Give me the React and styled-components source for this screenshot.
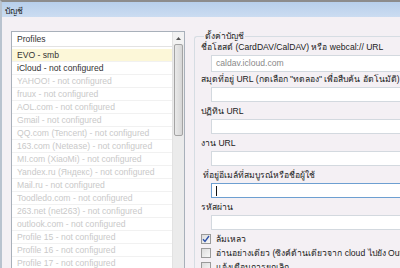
import React from "react";
import styled, { createGlobalStyle } from "styled-components";

const Global = createGlobalStyle`
  html, body { margin: 0; padding: 0; background: #f4f0f4; overflow: hidden; }
  body { font-family: "Liberation Sans", "Noto Sans", "DejaVu Sans", sans-serif; }
`;

const Frame = styled.div`
  width: 400px;
  height: 268px;
  box-sizing: border-box;
  border-top: 2px solid #8c8c8c;
  border-left: 2px solid #b9c3cf;
  background: #f4f0f4;
  display: flex;
  flex-direction: column;
  overflow: hidden;
`;

const TitleBar = styled.div`
  height: 15px;
  flex: none;
  box-sizing: border-box;
  padding: 3px 0 0 3px;
  background: linear-gradient(#b7cfeb, #cbdcf1);
  font-size: 8.5px;
  color: #222;
  display: flex;
  align-items: center;
`;

const Body = styled.div`
  flex: 1;
  display: flex;
  align-items: flex-start;
  gap: 9px;
  padding: 14px 0 0 9px;
  min-height: 0;
`;

const ListBox = styled.div`
  width: 174px;
  height: 260px;
  flex: none;
  box-sizing: border-box;
  border: 1px solid #a8b0ba;
  background: #fff;
  display: flex;
`;

const ListContent = styled.div`
  flex: 1;
  display: flex;
  flex-direction: column;
`;

const Header = styled.div`
  height: 14px;
  line-height: 14px;
  padding-left: 5px;
  font-size: 8.6px;
  color: #333;
  border-bottom: 1px solid #e3e3e3;
  margin-bottom: 2px;
`;

const Item = styled.div`
  height: 12px;
  line-height: 12px;
  padding-left: 5px;
  font-size: 8.6px;
  white-space: nowrap;
  border-bottom: 1px solid #f1f1f1;
  color: ${(p) => (p.$disabled ? "#c9c9c9" : "#333")};
  background: ${(p) => (p.$selected ? "#fcf7d8" : "#fff")};
`;

const ScrollBar = styled.div`
  width: 11px;
  flex: none;
  background: #ebebeb;
  border-left: 1px solid #e2e2e2;
  display: flex;
  flex-direction: column;
  align-items: center;
`;

const ArrowBtn = styled.div`
  height: 12px;
  width: 100%;
  display: flex;
  align-items: center;
  justify-content: center;
  background: #f2f2f2;
`;

const Thumb = styled.div`
  width: 9px;
  height: 92px;
  box-sizing: border-box;
  border: 1px solid #a4a4a4;
  border-radius: 2px;
  background: linear-gradient(90deg, #e9e9e9, #d6d6d6);
`;

const Group = styled.fieldset`
  flex: 1;
  margin: 0;
  padding: 1px 0 0 6px;
  border: 1px solid #d6dde3;
  border-right: none;
  border-radius: 3px 0 0 0;
  min-width: 0;
  height: 260px;
  box-sizing: border-box;
`;

const Legend = styled.legend`
  font-size: 8.5px;
  color: #222;
  padding: 0 1px;
  margin-left: 3px;
  line-height: 10px;
`;

const Field = styled.div`
  display: flex;
  flex-direction: column;
  margin-bottom: ${(p) => (p.$first ? "2px" : "4px")};
`;

const Label = styled.div`
  font-size: 8.6px;
  color: #222;
  line-height: 11px;
  height: 11px;
  white-space: nowrap;
  margin-bottom: 2px;
  padding-left: ${(p) => (p.$indent ? "2px" : "0")};
`;

const Input = styled.div`
  margin-left: 10px;
  height: ${(p) => (p.$tall ? "17px" : "15px")};
  box-sizing: border-box;
  border: 1px solid ${(p) => (p.$focus ? "#6d9fd1" : "#d3d9df")};
  background: #fff;
  font-size: 8.6px;
  color: #8a8a8a;
  line-height: 15px;
  padding-left: 4px;
  margin-right: -20px;
  display: flex;
  align-items: center;
`;

const Caret = styled.span`
  width: 1px;
  height: 10px;
  background: #111;
`;

const Checks = styled.div`
  display: flex;
  flex-direction: column;
  gap: 4px;
`;

const CheckRow = styled.div`
  display: flex;
  align-items: center;
  gap: 5px;
  height: 10px;
  font-size: 8.6px;
  color: #222;
  white-space: nowrap;
`;

const Box = styled.div`
  width: 10px;
  height: 10px;
  box-sizing: border-box;
  border: 1px solid #9a9a9a;
  background: linear-gradient(135deg, #dcdcdc, #f8f8f8);
  display: flex;
  align-items: center;
  justify-content: center;
  flex: none;
`;

const profiles = [
  ["EVO - smb", false, true],
  ["iCloud - not configured", false, false],
  ["YAHOO! - not configured", true],
  ["fruux - not configured", true],
  ["AOL.com - not configured", true],
  ["Gmail - not configured", true],
  ["QQ.com (Tencent) - not configured", true],
  ["163.com (Netease) - not configured", true],
  ["MI.com (XiaoMi) - not configured", true],
  ["Yandex.ru (Яндекс) - not configured", true],
  ["Mail.ru - not configured", true],
  ["Toodledo.com - not configured", true],
  ["263.net (net263) - not configured", true],
  ["outlook.com - not configured", true],
  ["Profile 15 - not configured", true],
  ["Profile 16 - not configured", true],
  ["Profile 17 - not configured", true],
];

export default function App() {
  return (
    <>
      <Global />
      <Frame>
        <TitleBar>บัญชี</TitleBar>
        <Body>
          <ListBox>
            <ListContent>
              <Header>Profiles</Header>
              {profiles.map(([t, d, s]) => (
                <Item key={t} $disabled={d} $selected={s}>{t}</Item>
              ))}
            </ListContent>
            <ScrollBar>
              <ArrowBtn>
                <svg width="5" height="3" viewBox="0 0 5 3"><path d="M0 3 L2.5 0 L5 3 Z" fill="#555" /></svg>
              </ArrowBtn>
              <Thumb />
            </ScrollBar>
          </ListBox>
          <Group>
            <Legend>ตั้งค่าบัญชี</Legend>
            <Field $first>
              <Label>ชื่อโฮสต์ (CardDAV/CalDAV) หรือ webcal:// URL</Label>
              <Input $tall>caldav.icloud.com</Input>
            </Field>
            <Field>
              <Label>สมุดที่อยู่ URL (กดเลือก "ทดลอง" เพื่อสืบค้น อัตโนมัติ)</Label>
              <Input />
            </Field>
            <Field>
              <Label>ปฏิทิน URL</Label>
              <Input />
            </Field>
            <Field>
              <Label>งาน URL</Label>
              <Input />
            </Field>
            <Field>
              <Label $indent>ที่อยู่อีเมล์ที่สมบูรณ์หรือชื่อผู้ใช้</Label>
              <Input $focus><Caret /></Input>
            </Field>
            <Field>
              <Label>รหัสผ่าน</Label>
              <Input />
            </Field>
            <Checks>
              <CheckRow>
                <Box>
                  <svg width="8" height="8" viewBox="0 0 8 8"><path d="M1 4.2 L3 6.5 L7 1" stroke="#2b4fa8" strokeWidth="1.3" fill="none" /></svg>
                </Box>
                ล้มเหลว
              </CheckRow>
              <CheckRow>
                <Box />
                อ่านอย่างเดียว (ซิงค์ด้านเดียวจาก cloud ไปยัง Outlook)
              </CheckRow>
              <CheckRow>
                <Box />
                แจ้งเตือนการยกเลิก
              </CheckRow>
            </Checks>
          </Group>
        </Body>
      </Frame>
    </>
  );
}
